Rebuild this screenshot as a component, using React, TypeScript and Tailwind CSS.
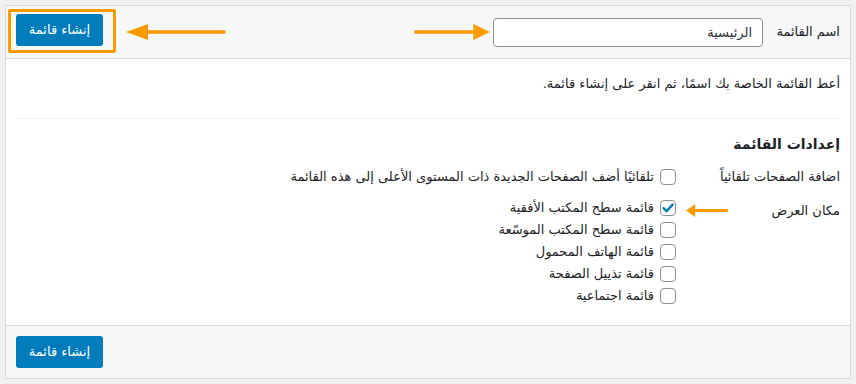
import React from 'react';

const locations = [
  { label: 'قائمة سطح المكتب الأفقية', checked: true },
  { label: 'قائمة سطح المكتب الموسّعة', checked: false },
  { label: 'قائمة الهاتف المحمول', checked: false },
  { label: 'قائمة تذييل الصفحة', checked: false },
  { label: 'قائمة اجتماعية', checked: false },
];

const Box = ({ checked }: { checked?: boolean }) => (
  <span className="relative inline-flex w-4 h-4 shrink-0 rounded-[4px] border border-[#8c8f94] bg-white">
    {checked && (
      <svg viewBox="0 0 16 16" className="absolute -left-[1px] -top-[1px] w-4 h-4">
        <path d="M3.5 8.2 L6.6 11.2 L12.6 4.6" fill="none" stroke="#007cba" strokeWidth="2.4" strokeLinecap="round" strokeLinejoin="round" />
      </svg>
    )}
  </span>
);

// orange pointer arrow, width/height come from className
const Arrow = ({ dir, className }: { dir: 'left' | 'right'; className: string }) => (
  <svg viewBox="0 0 100 18" className={className} preserveAspectRatio="none">
    {dir === 'left' ? (
      <>
        <line x1="20" y1="9" x2="98" y2="9" stroke="#f89b00" strokeWidth="4" strokeLinecap="round" />
        <polygon points="0,9 22,0 22,18" fill="#f89b00" />
      </>
    ) : (
      <>
        <line x1="2" y1="9" x2="80" y2="9" stroke="#f89b00" strokeWidth="4" strokeLinecap="round" />
        <polygon points="100,9 78,0 78,18" fill="#f89b00" />
      </>
    )}
  </svg>
);

const CreateButton = () => (
  <button type="button" className="h-8 w-[87px] rounded-[3px] bg-[#007cba] text-white text-[13px] font-medium">
    إنشاء قائمة
  </button>
);

export default function App() {
  return (
    <div
      dir="rtl"
      className="w-[856px] h-[384px] bg-[#f0f0f1] p-[5px] text-[13px] text-[#1d2327]"
      style={{ fontFamily: 'Tahoma, "DejaVu Sans", sans-serif' }}
    >
      <div className="h-[374px] border border-[#dcdcde] flex flex-col">
        {/* Header */}
        <div className="h-[53px] bg-[#f6f7f7] border-b border-[#dcdcde] flex items-center pr-[10px] pl-[2px]">
          <span className="w-[77px]">اسم القائمة</span>
          <input
            readOnly
            value="الرئيسية"
            className="w-[270px] h-[29px] rounded-[4px] border border-[#8c8f94] bg-white px-[10px] text-[13px] text-[#2c3338] outline-none"
          />
          <Arrow dir="right" className="w-[76px] h-[16px] mr-[3px]" />
          <div className="flex-1" />
          <Arrow dir="left" className="w-[100px] h-[16px] ml-[10px]" />
          <div className="border-[3px] border-[#f89b00] rounded-[2px] pl-[5px] pr-[10px] pt-[2px] pb-[4px] mt-[-2px]">
            <CreateButton />
          </div>
        </div>

        {/* Body */}
        <div className="flex-1 bg-white px-[10px]">
          <p className="pt-[15px] h-[59px]">أعط القائمة الخاصة بك اسمًا، ثم انقر على إنشاء قائمة.</p>
          <div className="border-t border-[#f0f0f1]" />
          <h3 className="mt-[15px] text-[14px] font-bold">إعدادات القائمة</h3>
          <div className="mt-[12px] flex items-center">
            <span className="w-[164px]">اضافة الصفحات تلقائياً</span>
            <label className="flex items-center gap-[6px]">
              <Box />
              <span>تلقائيًا أضف الصفحات الجديدة ذات المستوى الأعلى إلى هذه القائمة</span>
            </label>
          </div>
          <div className="mt-[13px] flex items-start">
            <span className="w-[164px] pt-[1px] flex items-center">
              <span className="flex-1">مكان العرض</span>
              <Arrow dir="left" className="w-[42px] h-[13px] ml-[10px] mt-[1px]" />
            </span>
            <div className="flex flex-col gap-[6px]">
              {locations.map(l => (
                <label key={l.label} className="flex items-center gap-[6px] h-4">
                  <Box checked={l.checked} />
                  <span>{l.label}</span>
                </label>
              ))}
            </div>
          </div>
        </div>

        {/* Footer */}
        <div className="h-[53px] bg-[#f6f7f7] border-t border-[#dcdcde] flex items-center pr-[10px] pl-[10px] justify-end">
          <CreateButton />
        </div>
      </div>
    </div>
  );
}
